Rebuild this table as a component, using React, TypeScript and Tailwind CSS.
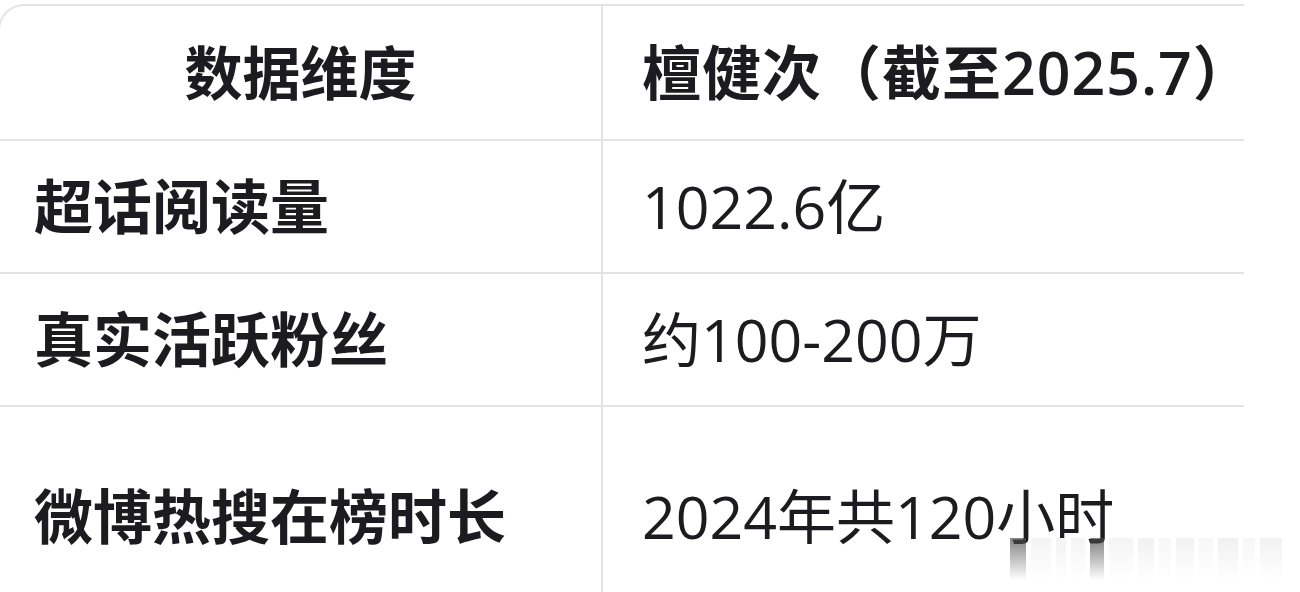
import type { ReactNode } from 'react';

const font = {
  fontFamily: '"Open Sans", "Noto Sans CJK SC", sans-serif',
};

type Row = {
  label: string;
  value: string;
  height: string;
};

const rows: Row[] = [
  { label: '超话阅读量', value: '1022.6亿', height: 'h-[133px]' },
  { label: '真实活跃粉丝', value: '约100-200万', height: 'h-[133px]' },
  { label: '微博热搜在榜时长', value: '2024年共120小时', height: 'h-[218px]' },
];

function Cell({ children, className }: { children: ReactNode; className: string }) {
  return <div className={`flex items-center ${className}`}>{children}</div>;
}

// blurred watermark strip in the bottom right corner
const streaks = [
  { w: 'w-[16px]', tone: 'from-[#505050]/70' },
  { w: 'w-[20px]', tone: 'from-[#ececec]/60' },
  { w: 'w-[10px]', tone: 'from-[#e6e6e6]/50' },
  { w: 'w-[14px]', tone: 'from-[#eaeaea]/50' },
  { w: 'w-[14px]', tone: 'from-[#4a4a4a]/70' },
  { w: 'w-[24px]', tone: 'from-[#ededed]/60' },
  { w: 'w-[16px]', tone: 'from-[#e8e8e8]/60' },
  { w: 'w-[12px]', tone: 'from-[#efefef]/50' },
  { w: 'w-[18px]', tone: 'from-[#e9e9e9]/60' },
  { w: 'w-[14px]', tone: 'from-[#efefef]/50' },
  { w: 'w-[20px]', tone: 'from-[#e7e7e7]/60' },
  { w: 'w-[12px]', tone: 'from-[#eeeeee]/50' },
  { w: 'w-[22px]', tone: 'from-[#e9e9e9]/60' },
];

export default function App() {
  return (
    <div className="relative h-[592px] w-[1300px] overflow-hidden bg-white pt-[4px] text-[#1b1b20]" style={font}>
      <div className="ml-[-2px] w-[1246px] rounded-tl-[26px] border-t-2 border-l-2 border-[#e3e3e3]">
        <div className="grid h-[135px] grid-cols-[603px_1fr] border-b-2 border-[#e3e3e3]">
          <Cell className="justify-center border-r-2 border-[#e3e3e3]">
            <span className="text-[58px] leading-none font-semibold">数据维度</span>
          </Cell>
          <Cell className="pl-[39px]">
            <span className="text-[59px] leading-none font-semibold tracking-[1px] whitespace-nowrap">
              檀健次（截至2025.7）
            </span>
          </Cell>
        </div>

        {rows.map((row, i) => (
          <div
            key={row.label}
            className={`grid grid-cols-[603px_1fr] ${row.height} ${i < rows.length - 1 ? 'border-b-2 border-[#e3e3e3]' : ''}`}
          >
            <Cell className="border-r-2 border-[#e3e3e3] pl-[34px]">
              <span className="text-[59px] leading-none font-semibold">{row.label}</span>
            </Cell>
            <Cell className="pl-[39px]">
              <span className="text-[59px] leading-none font-normal whitespace-nowrap">{row.value}</span>
            </Cell>
          </div>
        ))}
      </div>

      <div className="absolute top-[538px] left-[1010px] flex h-[42px] gap-[5px]">
        {streaks.map((s, i) => (
          <div key={i} className={`h-full ${s.w} bg-gradient-to-b ${s.tone} to-white/0`} />
        ))}
      </div>
    </div>
  );
}
